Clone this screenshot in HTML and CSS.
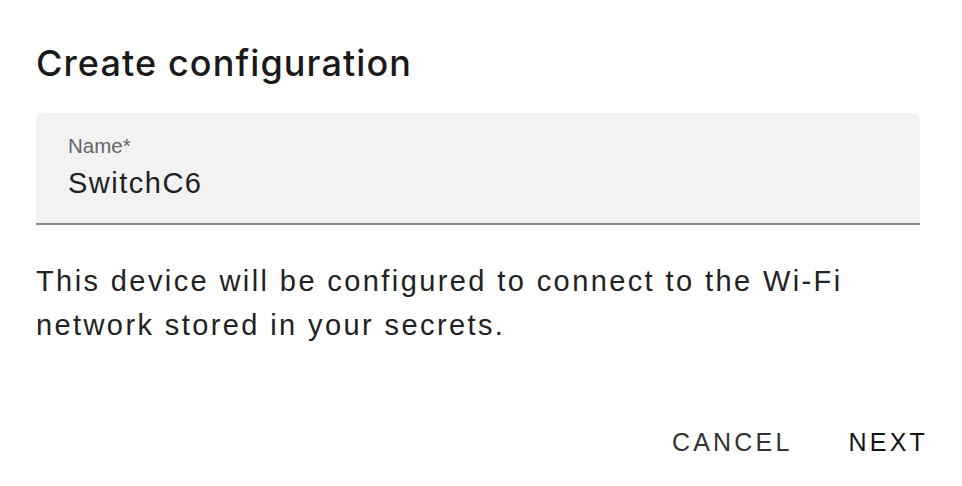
FILE: index.html
```html
<!DOCTYPE html>
<html>
<head>
<meta charset="utf-8">
<link rel="stylesheet" href="styles.css">
</head>
<body>
<div class="dialog">
  <h2 class="title">Create configuration</h2>
  <div class="content">
    <div class="field">
      <span class="label">Name*</span>
      <span class="value">SwitchC6</span>
    </div>
    <p class="text">This device will be configured to connect to the Wi-Fi<br>network stored in your secrets.</p>
  </div>
  <div class="actions">
    <button class="btn btn-cancel">Cancel</button>
    <button class="btn btn-next">Next</button>
  </div>
</div>
</body>
</html>
```
FILE: styles.css
```css
html, body {
  margin: 0;
  padding: 0;
  background: #ffffff;
}
body {
  font-family: "Liberation Sans", Arial, sans-serif;
  color: #1f1f1f;
  width: 962px;
  height: 486px;
  overflow: hidden;
}
.dialog {
  display: flex;
  flex-direction: column;
  padding: 0 0 0 36px;
}
.title {
  margin: 0;
  padding-top: 41px;
  font-family: Inter, "Liberation Sans", sans-serif;
  font-size: 36px;
  line-height: 44px;
  font-weight: 500;
  color: #1a1a1a;
  letter-spacing: 1.1px;
}
.content {
  padding-right: 42px;
  padding-top: 28px;
}
.field {
  display: flex;
  flex-direction: column;
  background: #f2f2f2;
  border-radius: 8px 8px 0 0;
  border-bottom: 2px solid #8a8a8a;
  height: 110px;
  box-sizing: content-box;
  padding: 0 32px;
}
.label {
  font-size: 20.5px;
  line-height: 26px;
  color: #666666;
  padding-top: 20px;
  letter-spacing: 0;
}
.value {
  font-size: 29px;
  line-height: 36px;
  color: #1f1f1f;
  padding-top: 6px;
  letter-spacing: 1.5px;
}
.text {
  margin: 0;
  padding-top: 34px;
  font-size: 29px;
  line-height: 44px;
  color: #222222;
  letter-spacing: 2.4px;
}
.actions {
  display: flex;
  justify-content: flex-end;
  gap: 56px;
  padding-right: 34px;
  margin-top: 81px;
}
.btn {
  background: none;
  border: none;
  padding: 0;
  font-family: inherit;
  font-size: 25px;
  line-height: 28px;
  text-transform: uppercase;
  letter-spacing: 3.2px;
  cursor: pointer;
}
.btn-cancel {
  color: #333333;
}
.btn-next {
  color: #141414;
}
```
